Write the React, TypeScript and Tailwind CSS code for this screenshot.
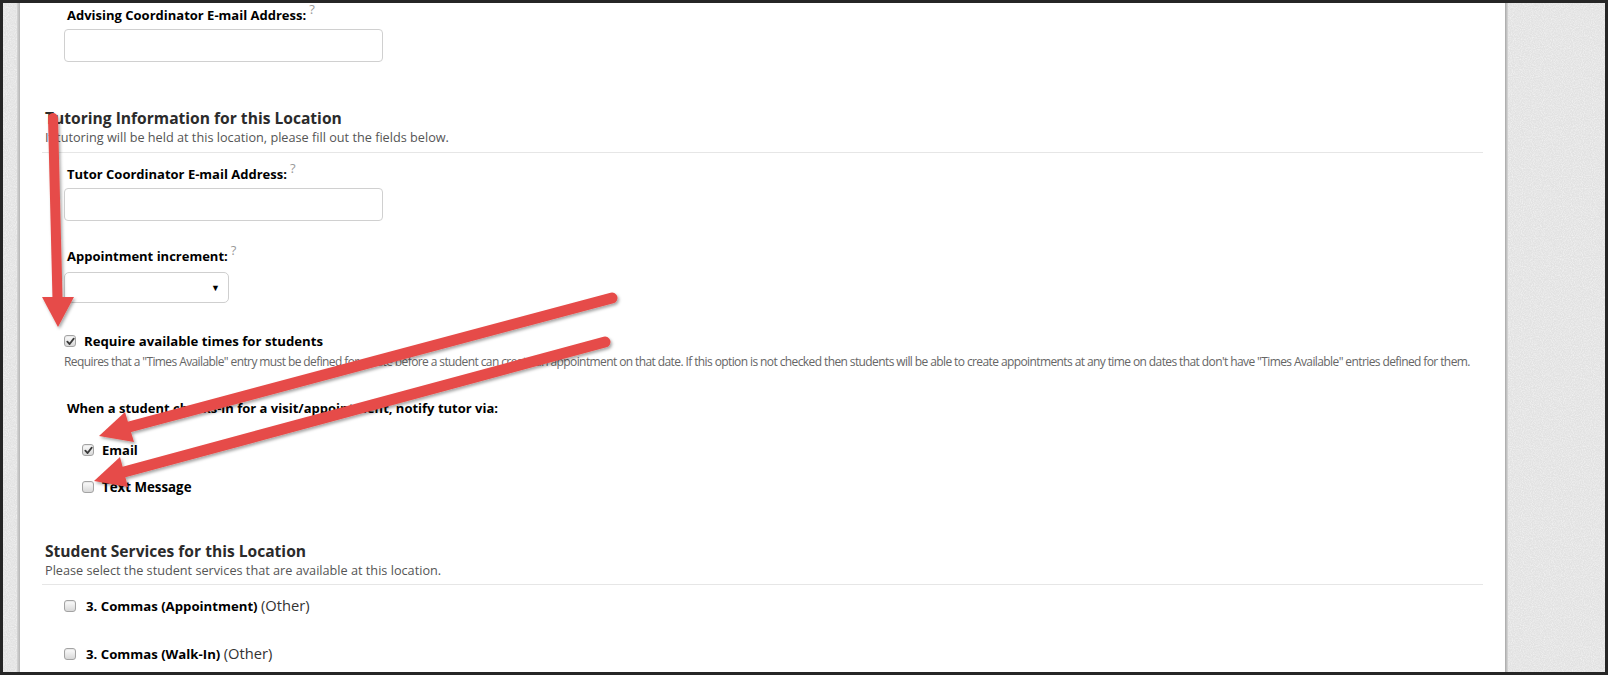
import React from "react";

const font = { fontFamily: '"Open Sans", "Noto Sans", Arial, sans-serif' };

function Help() {
  return <sup className="ml-[3px] text-[13px] leading-none font-normal text-[#9a9a9a] relative -top-[6px]">?</sup>;
}

function Box({ checked = false }: { checked?: boolean }) {
  return (
    <span className="inline-flex w-[12px] h-[12px] shrink-0 items-center justify-center rounded-[3px] border border-[#a3a3a3] bg-gradient-to-b from-[#fdfdfd] to-[#d8d8d8] shadow-[inset_0_1px_1px_rgba(0,0,0,0.08)]">
      {checked && (
        <svg width="9" height="9" viewBox="0 0 10 10">
          <path d="M1.5 5.2 L4 7.8 L8.6 1.8" fill="none" stroke="#3a3a3a" strokeWidth="2" strokeLinecap="round" strokeLinejoin="round" />
        </svg>
      )}
    </span>
  );
}

function Paper({ className }: { className: string }) {
  // grainy grey paper texture on the page margins
  return (
    <div className={`relative overflow-hidden bg-[#e2e2e2] ${className}`}>
      <svg className="absolute inset-0" width="100%" height="100%">
        <filter id="grain">
          <feTurbulence type="fractalNoise" baseFrequency="0.9" numOctaves="2" seed="3" />
          <feColorMatrix type="matrix" values="0 0 0 0 1  0 0 0 0 1  0 0 0 0 1  0 0 0 1.4 -0.5" />
        </filter>
        <rect width="100%" height="100%" filter="url(#grain)" opacity="0.7" />
      </svg>
    </div>
  );
}

function Arrows() {
  const red = "#e64c48";
  return (
    <svg className="absolute inset-0 pointer-events-none" width="1608" height="675">
      <defs>
        <filter id="sh" x="-10%" y="-10%" width="120%" height="130%">
          <feDropShadow dx="1.5" dy="2" stdDeviation="1.6" floodColor="#000" floodOpacity="0.35" />
        </filter>
      </defs>
      <g filter="url(#sh)" fill={red} stroke={red}>
        {/* down arrow */}
        <line x1="53" y1="118" x2="57.5" y2="299" strokeWidth="10" strokeLinecap="round" />
        <polygon points="42,297 74,297 58,327" stroke="none" />
        {/* arrow to Email */}
        <line x1="612" y1="298" x2="129" y2="427" strokeWidth="11" strokeLinecap="round" />
        <polygon points="125,412 134,442 99,436" stroke="none" />
        {/* arrow to Text Message */}
        <line x1="605" y1="342" x2="124" y2="472" strokeWidth="11" strokeLinecap="round" />
        <polygon points="120,457 128,487 94,481" stroke="none" />
      </g>
    </svg>
  );
}

export default function App() {
  return (
    <div className="relative w-[1608px] h-[675px] bg-[#262626] p-[3px] overflow-hidden" style={font}>
      <div className="flex h-full">
        {/* left paper edge */}
        <Paper className="w-[14px]" />
        <div className="w-[3px] bg-gradient-to-r from-[#d6d6d6] to-[#b5b5b5]" />

        {/* page */}
        <div className="w-[1485px] bg-white overflow-hidden pt-[3px] pl-[22px] pr-[22px]">
          <div className="pl-[22px]">
            <div className="pl-[3px] text-[13px] leading-[18px] font-bold text-black">
              Advising Coordinator E-mail Address:<Help />
            </div>
            <div className="mt-[5px] w-[319px] h-[33px] rounded-[4px] border border-[#d0d0d0]" />
          </div>

          <div className="mt-[46px] pl-[3px] text-[15.6px] leading-[20px] font-bold text-[#2b2b2b]">
            Tutoring Information for this Location
          </div>
          <div className="mt-[1px] pl-[3px] text-[12.7px] leading-[16px] text-[#555]">
            If tutoring will be held at this location, please fill out the fields below.
          </div>
          <div className="mt-[7px] h-px bg-[#e6e6e6]" />

          <div className="pl-[22px]">
            <div className="mt-[12px] pl-[3px] text-[13px] leading-[18px] font-bold text-black">
              Tutor Coordinator E-mail Address:<Help />
            </div>
            <div className="mt-[5px] w-[319px] h-[33px] rounded-[4px] border border-[#d0d0d0]" />

            <div className="mt-[26px] pl-[3px] text-[13px] leading-[18px] font-bold text-black">
              Appointment increment:<Help />
            </div>
            <div className="mt-[7px] w-[165px] h-[31px] rounded-[5px] border border-[#cfcfcf] flex items-center justify-end pr-[8px]">
              <span className="text-[9px] text-black">▼</span>
            </div>

            <div className="mt-[29px] flex items-center gap-[8px] text-[13.2px] leading-[18px] font-bold text-black">
              <Box checked />
              Require available times for students
            </div>
            <div className="mt-[5px] text-[12px] leading-[14px] tracking-[-0.6px] text-[#666] whitespace-nowrap">
              Requires that a "Times Available" entry must be defined for a date before a student can create an appointment on that date. If this option is not checked then students will be able to create appointments at any time on dates that don't have "Times Available" entries defined for them.
            </div>

            <div className="mt-[30px] pl-[3px] text-[13px] leading-[18px] font-bold text-black">
              When a student checks-in for a visit/appointment, notify tutor via:
            </div>
            <div className="pl-[18px]">
              <div className="mt-[24px] flex items-center gap-[8px] text-[13px] leading-[18px] font-bold text-black">
                <Box checked />
                Email
              </div>
              <div className="mt-[19px] flex items-center gap-[8px] text-[13.3px] leading-[18px] font-bold text-black">
                <Box />
                Text Message
              </div>
            </div>
          </div>

          <div className="mt-[45px] pl-[3px] text-[15.6px] leading-[20px] font-bold text-[#2b2b2b]">
            Student Services for this Location
          </div>
          <div className="mt-[1px] pl-[3px] text-[12.7px] leading-[16px] text-[#555]">
            Please select the student services that are available at this location.
          </div>
          <div className="mt-[6px] h-px bg-[#e6e6e6]" />

          <div className="pl-[22px]">
            <div className="mt-[12px] h-[18px] flex items-center gap-[10px] text-[13.2px] leading-[18px] text-black">
              <Box />
              <span>
                <b>3. Commas (Appointment)</b> <span className="text-[14.7px] leading-none text-[#333]">(Other)</span>
              </span>
            </div>
            <div className="mt-[30px] h-[18px] flex items-center gap-[10px] text-[13.2px] leading-[18px] text-black">
              <Box />
              <span>
                <b>3. Commas (Walk-In)</b> <span className="text-[14.7px] leading-none text-[#333]">(Other)</span>
              </span>
            </div>
          </div>
        </div>

        {/* right paper edge */}
        <div className="w-[3px] bg-gradient-to-r from-[#a8a8a8] to-[#d9d9d9]" />
        <Paper className="flex-1" />
      </div>
      <Arrows />
    </div>
  );
}
